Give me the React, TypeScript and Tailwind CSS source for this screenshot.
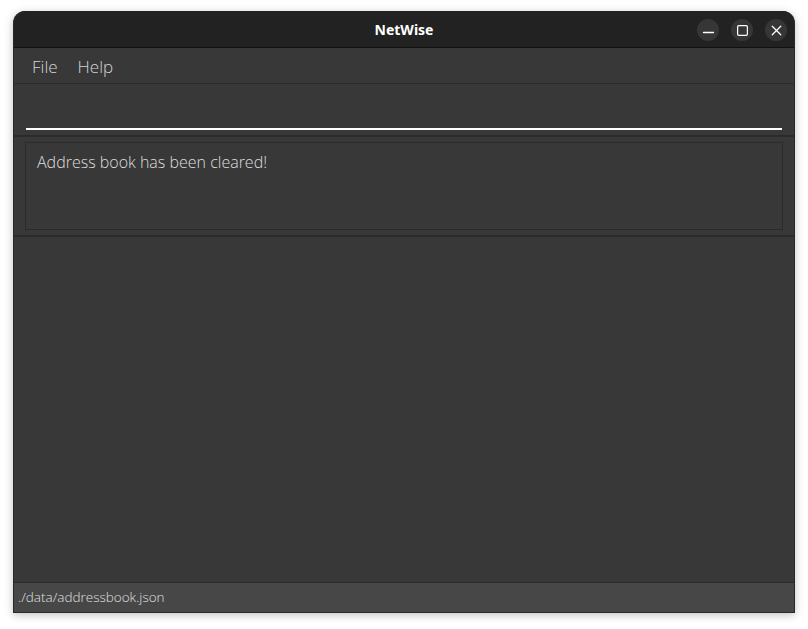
import { Minus, Square, X } from "lucide-react";

export default function App() {
  return (
    <div className="h-[629px] w-[808px] bg-white pl-[13px] pt-[11px]">
      {/* Window */}
      <div className="flex h-[602px] w-[782px] flex-col overflow-hidden rounded-t-[12px] border-x border-b border-[#2a2a2a] bg-[#383838] shadow-[0_2px_8px_rgba(0,0,0,0.25)]">
        {/* Title bar */}
        <div className="relative flex h-[37px] items-center justify-center border-b border-[#111] bg-[#222]">
          <span className="font-['Noto_Sans',sans-serif] text-[14px] font-bold text-white">NetWise</span>
          <div className="absolute right-[7px] top-[8px] flex gap-[12px]">
            <div className="flex h-[22px] w-[22px] items-center justify-center rounded-full bg-[#363636]">
              <Minus className="mt-[5px] h-[17px] w-[17px] text-white" strokeWidth={2} />
            </div>
            <div className="flex h-[22px] w-[22px] items-center justify-center rounded-full bg-[#363636]">
              <Square className="h-[13px] w-[13px] text-white" strokeWidth={2.2} />
            </div>
            <div className="flex h-[22px] w-[22px] items-center justify-center rounded-full bg-[#363636]">
              <X className="h-[17px] w-[17px] text-white" strokeWidth={1.8} />
            </div>
          </div>
        </div>

        {/* Menu bar */}
        <div className="flex h-[36px] items-center gap-[20px] border-b border-[#2c2c2c] pl-[18px] pt-[2px] font-['Open_Sans',sans-serif] text-[17px] font-light text-[#d4d4d4]">
          <span>File</span>
          <span>Help</span>
        </div>

        {/* Command box */}
        <div className="flex h-[53px] items-end border-b-2 border-[#2b2b2b] px-[12px] pb-[5px]">
          <div className="h-[2px] w-full bg-white" />
        </div>

        {/* Result display */}
        <div className="border-b-2 border-[#2b2b2b] px-[11px] py-[5px]">
          <div className="h-[88px] border border-[#2a2a2a] px-[11px] pt-[7px] font-['Open_Sans',sans-serif] text-[16px] font-light text-[#dedede]">
            Address book has been cleared!
          </div>
        </div>

        {/* Person list */}
        <div className="flex-1" />

        {/* Status bar */}
        <div className="flex h-[30px] items-center border-t border-[#2b2b2b] bg-[#474747] pl-[4px] font-['Open_Sans',sans-serif] text-[13.5px] font-light text-[#e0e0e0]">
          ./data/addressbook.json
        </div>
      </div>
    </div>
  );
}
